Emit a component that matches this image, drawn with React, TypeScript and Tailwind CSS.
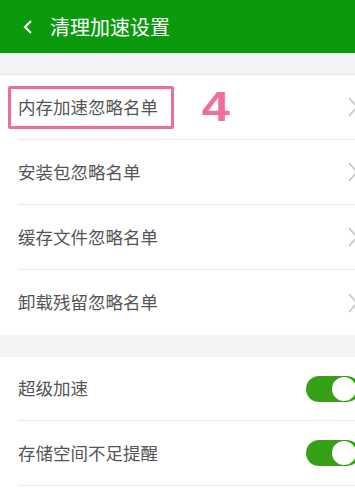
import React, { useState } from 'react';

const font = { fontFamily: '"Noto Sans CJK SC", "Noto Sans", sans-serif' };

function Chevron() {
  return (
    <svg width="12" height="22" viewBox="0 0 12 22" className="shrink-0 -mr-[4px]">
      <path d="M2 2 L10 11 L2 20" fill="none" stroke="#c4c4c4" strokeWidth="1.5" />
    </svg>
  );
}

function Toggle({ on, onClick }: { on: boolean; onClick: () => void }) {
  return (
    <button
      onClick={onClick}
      className={`relative shrink-0 w-[54px] h-[26px] rounded-full -mr-[5px] ${on ? 'bg-[#36a116]' : 'bg-[#dcdcdc]'}`}
    >
      <span
        className={`absolute top-[1px] w-[24px] h-[24px] rounded-full bg-white ${on ? 'right-[4px]' : 'left-[1px]'}`}
      />
    </button>
  );
}

function LinkRow({ label, last, highlight }: { label: string; last?: boolean; highlight?: boolean }) {
  return (
    <div className="pl-[18px]">
      <div className={`h-[65px] flex items-center justify-between ${last ? '' : 'border-b border-[#e8e8e8]'}`}>
        <div className="flex items-center">
          {highlight ? (
            <div className="-ml-[10px] h-[43px] w-[166px] border-[3px] border-[#ec6f9b] rounded-[2px] flex items-center pl-[7px]">
              <span className="text-[17.5px] text-[#555]">{label}</span>
            </div>
          ) : (
            <span className="text-[17.5px] text-[#555]">{label}</span>
          )}
          {highlight && (
            <span
              className="ml-[30px] text-[42px] font-bold text-[#ee6f9c] leading-none scale-x-[1.2]"
              style={{ fontFamily: '"Liberation Sans", sans-serif' }}
            >
              4
            </span>
          )}
        </div>
        <Chevron />
      </div>
    </div>
  );
}

export default function App() {
  const [turbo, setTurbo] = useState(true);
  const [remind, setRemind] = useState(true);

  return (
    <div className="w-[355px] h-[491px] overflow-hidden bg-white" style={font}>
      {/* Header */}
      <header className="h-[53px] bg-[#0b9a0e] flex items-center pl-[22px]">
        <svg width="12" height="16" viewBox="0 0 12 16">
          <path d="M9 2 L3 8 L9 14" fill="none" stroke="white" strokeWidth="2.2" />
        </svg>
        <h1 className="ml-[16px] text-[20px] text-white">清理加速设置</h1>
      </header>

      <div className="h-[22px] bg-[#f3f2f5] border-b border-[#e6e6e6]" />

      <div className="bg-white">
        <LinkRow label="内存加速忽略名单" highlight />
        <LinkRow label="安装包忽略名单" />
        <LinkRow label="缓存文件忽略名单" />
        <LinkRow label="卸载残留忽略名单" last />
      </div>

      <div className="h-[22px] bg-[#f3f2f5]" />

      <div className="bg-white">
        <div className="pl-[18px]">
          <div className="h-[64px] flex items-center justify-between border-b border-[#e8e8e8]">
            <span className="text-[17.5px] text-[#555]">超级加速</span>
            <Toggle on={turbo} onClick={() => setTurbo(!turbo)} />
          </div>
        </div>
        <div className="pl-[18px]">
          <div className="h-[65px] flex items-center justify-between border-b border-[#e8e8e8]">
            <span className="text-[17.5px] text-[#555]">存储空间不足提醒</span>
            <Toggle on={remind} onClick={() => setRemind(!remind)} />
          </div>
        </div>
      </div>
    </div>
  );
}
